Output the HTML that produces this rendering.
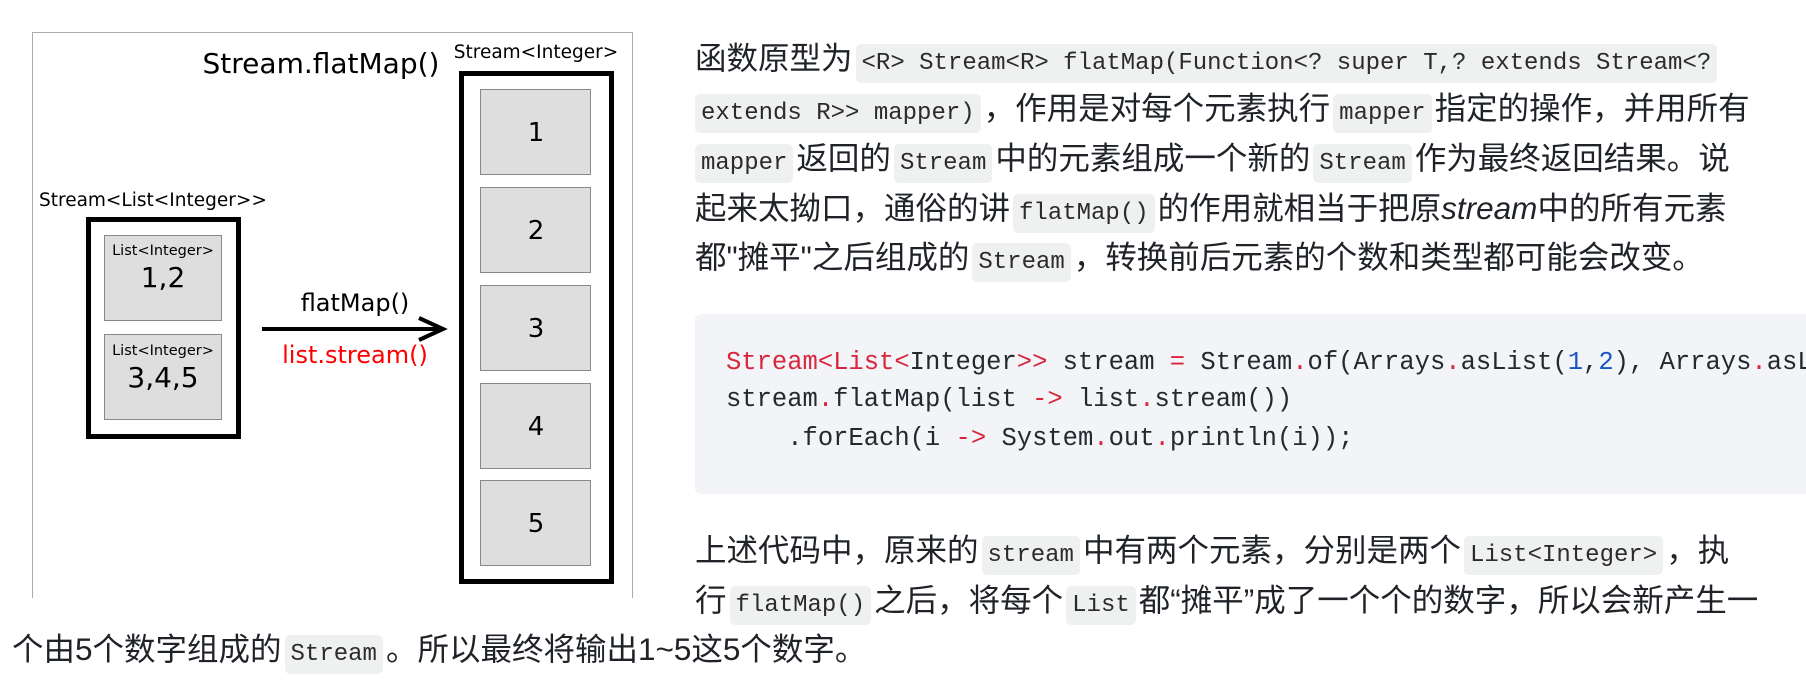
<!DOCTYPE html>
<html><head><meta charset="utf-8"><style>
html,body{margin:0;width:1806px;height:698px;overflow:hidden}
body{background:#fff;position:relative;font-family:"Liberation Sans","Noto Sans CJK SC",sans-serif;color:#1f2328}
.l{position:absolute;left:695px;height:50px;line-height:50px;font-size:31.5px;white-space:nowrap}
code{font-family:"Liberation Mono",monospace;font-size:24px;background:#eff1f1;border-radius:5px;padding:6px 6px;margin:0 3px;color:#2b2b2b}
.cb{position:absolute;left:695px;top:314px;width:1111px;height:180px;background:#f3f4f8;border-radius:6px 0 0 6px;overflow:hidden}
.cl{position:absolute;left:31px;font-family:"Liberation Mono",monospace;font-size:25.5px;line-height:38px;height:38px;white-space:pre;color:#24292e}
.r{color:#d7263d}.b{color:#1a55c6}
</style></head><body>
<svg style="position:absolute;left:0;top:0" width="680" height="698" font-family="DejaVu Sans, sans-serif">
<rect x="32.5" y="32.5" width="600" height="580" fill="#fff" stroke="#aaa" stroke-width="1"/>
<rect x="0" y="598" width="680" height="100" fill="#fff"/>
<text x="321" y="73" font-size="28" text-anchor="middle">Stream.flatMap()</text>
<text x="536" y="58" font-size="18.5" text-anchor="middle">Stream&lt;Integer&gt;</text>
<rect x="461.5" y="73.5" width="150" height="508" fill="#fff" stroke="#000" stroke-width="5"/>
<g fill="#dedede" stroke="#888" stroke-width="1">
<rect x="480.5" y="89.5" width="110" height="85"/>
<rect x="480.5" y="187.5" width="110" height="85"/>
<rect x="480.5" y="285.5" width="110" height="85"/>
<rect x="480.5" y="383.5" width="110" height="85"/>
<rect x="480.5" y="480.5" width="110" height="85"/>
</g>
<g font-size="26" text-anchor="middle">
<text x="536" y="141">1</text><text x="536" y="239">2</text><text x="536" y="337">3</text><text x="536" y="435">4</text><text x="536" y="532">5</text>
</g>
<text x="39" y="206" font-size="18.5">Stream&lt;List&lt;Integer&gt;&gt;</text>
<rect x="88.5" y="219.5" width="150" height="217" fill="#fff" stroke="#000" stroke-width="5"/>
<rect x="104.5" y="235.5" width="117" height="85" fill="#dedede" stroke="#888"/>
<rect x="104.5" y="334.5" width="117" height="85" fill="#dedede" stroke="#888"/>
<g text-anchor="middle">
<text x="163" y="255" font-size="14.5">List&lt;Integer&gt;</text>
<text x="163" y="287" font-size="28">1,2</text>
<text x="163" y="355" font-size="14.5">List&lt;Integer&gt;</text>
<text x="163" y="387" font-size="28">3,4,5</text>
<text x="355" y="311" font-size="24">flatMap()</text>
<text x="355" y="363" font-size="24" fill="#ff0000">list.stream()</text>
</g>
<line x1="262" y1="329" x2="442" y2="329" stroke="#000" stroke-width="4"/>
<polyline points="419,318 443,329 419,340" fill="none" stroke="#000" stroke-width="4"/>
</svg>

<div class="l" style="top:33px">函数原型为<code>&lt;R&gt; Stream&lt;R&gt; flatMap(Function&lt;? super T,? extends Stream&lt;?</code></div>
<div class="l" style="top:83px"><code style="margin-left:0">extends R&gt;&gt; mapper)</code>，作用是对每个元素执行<code>mapper</code>指定的操作，并用所有</div>
<div class="l" style="top:133px"><code style="margin-left:0">mapper</code>返回的<code>Stream</code>中的元素组成一个新的<code>Stream</code>作为最终返回结果。说</div>
<div class="l" style="top:183px">起来太拗口，通俗的讲<code>flatMap()</code>的作用就相当于把原<i>stream</i>中的所有元素</div>
<div class="l" style="top:232px">都"摊平"之后组成的<code>Stream</code>，转换前后元素的个数和类型都可能会改变。</div>

<div class="cb">
<div class="cl" style="top:30px"><span class="r">Stream&lt;List&lt;</span>Integer<span class="r">&gt;&gt;</span> stream <span class="r">=</span> Stream<span class="r">.</span>of(Arrays<span class="r">.</span>asList(<span class="b">1</span>,<span class="b">2</span>), Arrays<span class="r">.</span>asList(<span class="b">3</span>,<span class="b">4</span>,<span class="b">5</span>));</div>
<div class="cl" style="top:67px">stream<span class="r">.</span>flatMap(list <span class="r">-&gt;</span> list<span class="r">.</span>stream())</div>
<div class="cl" style="top:106px">    .forEach(i <span class="r">-&gt;</span> System<span class="r">.</span>out<span class="r">.</span>println(i));</div>
</div>

<div class="l" style="top:525px">上述代码中，原来的<code>stream</code>中有两个元素，分别是两个<code>List&lt;Integer&gt;</code>，执</div>
<div class="l" style="top:575px">行<code>flatMap()</code>之后，将每个<code>List</code>都“摊平”成了一个个的数字，所以会新产生一</div>
<div class="l" style="top:624px;left:12px">个由5个数字组成的<code>Stream</code>。所以最终将输出1~5这5个数字。</div>
</body></html>
